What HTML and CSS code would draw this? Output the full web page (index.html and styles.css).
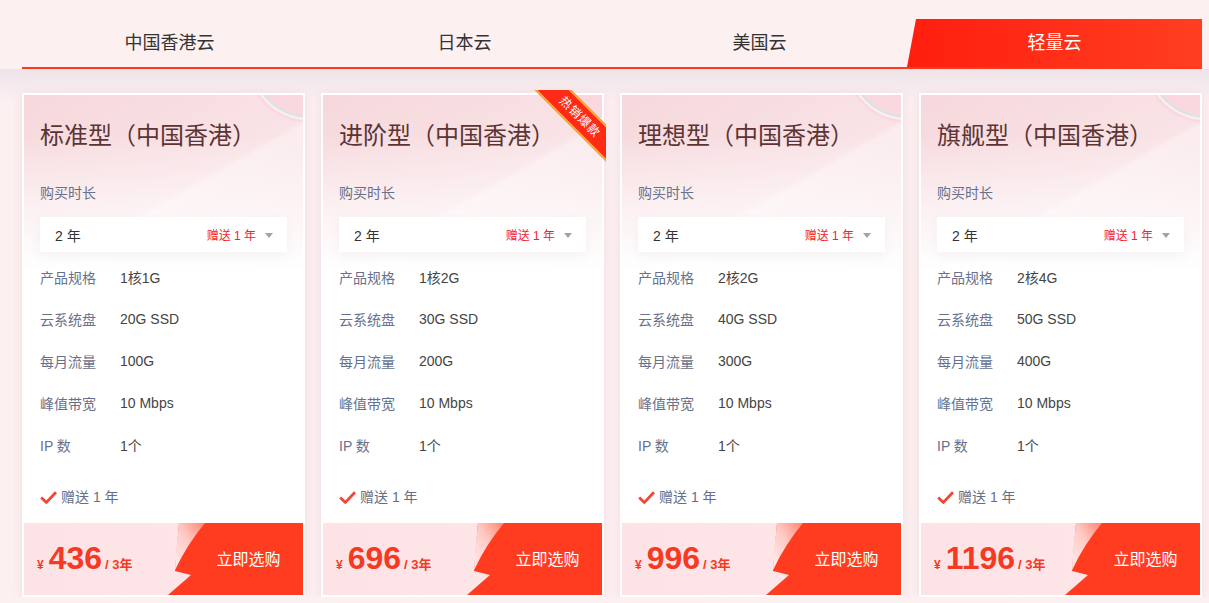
FILE: index.html
```html
<!DOCTYPE html>
<html lang="zh-CN">
<head>
    <meta charset="UTF-8">
    <title>云服务器套餐</title>
    <link rel="stylesheet" href="styles.css">
</head>
<body>
    <svg class="svg-defs" width="0" height="0">
        <defs>
            <linearGradient id="curl" x1="1" y1="0" x2="0" y2="1">
                <stop offset="0" stop-color="#ff846f"/>
                <stop offset="0.45" stop-color="#ffc8c2"/>
                <stop offset="1" stop-color="#ffeeee"/>
            </linearGradient>
        </defs>
    </svg>

    <div class="header">
        <ul class="tabs">
            <li class="tab">中国香港云</li>
            <li class="tab">日本云</li>
            <li class="tab">美国云</li>
            <li class="tab active">轻量云</li>
        </ul>
    </div>

    <div class="main">
        <!-- 标准型 -->
        <div class="card">
            <div class="card-body">
                <h3 class="title">标准型（中国香港）</h3>
                <p class="label">购买时长</p>
                <div class="select">
                    <span class="select-value">2 年</span>
                    <span class="gift">赠送 1 年</span>
                    <i class="arrow"></i>
                </div>
                <ul class="specs">
                    <li><span class="spec-name">产品规格</span><span class="spec-value">1核1G</span></li>
                    <li><span class="spec-name">云系统盘</span><span class="spec-value">20G SSD</span></li>
                    <li><span class="spec-name">每月流量</span><span class="spec-value">100G</span></li>
                    <li><span class="spec-name">峰值带宽</span><span class="spec-value">10 Mbps</span></li>
                    <li><span class="spec-name">IP 数</span><span class="spec-value">1个</span></li>
                </ul>
                <div class="bonus">
                    <svg class="check" width="17" height="13" viewBox="0 0 17 13"><path d="M1.2 6.4 L6.4 11.4 L16 1.2" fill="none" stroke="#f24634" stroke-width="2.8" stroke-linejoin="round"/></svg>
                    赠送 1 年
                </div>
            </div>
            <div class="card-foot">
                <div class="price"><span class="yen">¥</span><span class="num">436</span><span class="unit">/ 3年</span></div>
                <a class="buy" href="#">
                    <svg class="buy-bg" width="137" height="72" viewBox="0 0 137 72">
                        <path d="M13 0 H137 V72 H2 L25 52 L9 48 Q11 24 13 0 Z" fill="#ff3c1f"/>
                        <path d="M13 0 H39 Q22 20 9 47 Q10 24 13 0 Z" fill="url(#curl)"/>
                    </svg>
                    <span>立即选购</span>
                </a>
            </div>
        </div>

        <!-- 进阶型 -->
        <div class="card">
            <div class="hot"><span>热销爆款</span></div>
            <div class="card-body">
                <h3 class="title">进阶型（中国香港）</h3>
                <p class="label">购买时长</p>
                <div class="select">
                    <span class="select-value">2 年</span>
                    <span class="gift">赠送 1 年</span>
                    <i class="arrow"></i>
                </div>
                <ul class="specs">
                    <li><span class="spec-name">产品规格</span><span class="spec-value">1核2G</span></li>
                    <li><span class="spec-name">云系统盘</span><span class="spec-value">30G SSD</span></li>
                    <li><span class="spec-name">每月流量</span><span class="spec-value">200G</span></li>
                    <li><span class="spec-name">峰值带宽</span><span class="spec-value">10 Mbps</span></li>
                    <li><span class="spec-name">IP 数</span><span class="spec-value">1个</span></li>
                </ul>
                <div class="bonus">
                    <svg class="check" width="17" height="13" viewBox="0 0 17 13"><path d="M1.2 6.4 L6.4 11.4 L16 1.2" fill="none" stroke="#f24634" stroke-width="2.8" stroke-linejoin="round"/></svg>
                    赠送 1 年
                </div>
            </div>
            <div class="card-foot">
                <div class="price"><span class="yen">¥</span><span class="num">696</span><span class="unit">/ 3年</span></div>
                <a class="buy" href="#">
                    <svg class="buy-bg" width="137" height="72" viewBox="0 0 137 72">
                        <path d="M13 0 H137 V72 H2 L25 52 L9 48 Q11 24 13 0 Z" fill="#ff3c1f"/>
                        <path d="M13 0 H39 Q22 20 9 47 Q10 24 13 0 Z" fill="url(#curl)"/>
                    </svg>
                    <span>立即选购</span>
                </a>
            </div>
        </div>

        <!-- 理想型 -->
        <div class="card">
            <div class="card-body">
                <h3 class="title">理想型（中国香港）</h3>
                <p class="label">购买时长</p>
                <div class="select">
                    <span class="select-value">2 年</span>
                    <span class="gift">赠送 1 年</span>
                    <i class="arrow"></i>
                </div>
                <ul class="specs">
                    <li><span class="spec-name">产品规格</span><span class="spec-value">2核2G</span></li>
                    <li><span class="spec-name">云系统盘</span><span class="spec-value">40G SSD</span></li>
                    <li><span class="spec-name">每月流量</span><span class="spec-value">300G</span></li>
                    <li><span class="spec-name">峰值带宽</span><span class="spec-value">10 Mbps</span></li>
                    <li><span class="spec-name">IP 数</span><span class="spec-value">1个</span></li>
                </ul>
                <div class="bonus">
                    <svg class="check" width="17" height="13" viewBox="0 0 17 13"><path d="M1.2 6.4 L6.4 11.4 L16 1.2" fill="none" stroke="#f24634" stroke-width="2.8" stroke-linejoin="round"/></svg>
                    赠送 1 年
                </div>
            </div>
            <div class="card-foot">
                <div class="price"><span class="yen">¥</span><span class="num">996</span><span class="unit">/ 3年</span></div>
                <a class="buy" href="#">
                    <svg class="buy-bg" width="137" height="72" viewBox="0 0 137 72">
                        <path d="M13 0 H137 V72 H2 L25 52 L9 48 Q11 24 13 0 Z" fill="#ff3c1f"/>
                        <path d="M13 0 H39 Q22 20 9 47 Q10 24 13 0 Z" fill="url(#curl)"/>
                    </svg>
                    <span>立即选购</span>
                </a>
            </div>
        </div>

        <!-- 旗舰型 -->
        <div class="card">
            <div class="card-body">
                <h3 class="title">旗舰型（中国香港）</h3>
                <p class="label">购买时长</p>
                <div class="select">
                    <span class="select-value">2 年</span>
                    <span class="gift">赠送 1 年</span>
                    <i class="arrow"></i>
                </div>
                <ul class="specs">
                    <li><span class="spec-name">产品规格</span><span class="spec-value">2核4G</span></li>
                    <li><span class="spec-name">云系统盘</span><span class="spec-value">50G SSD</span></li>
                    <li><span class="spec-name">每月流量</span><span class="spec-value">400G</span></li>
                    <li><span class="spec-name">峰值带宽</span><span class="spec-value">10 Mbps</span></li>
                    <li><span class="spec-name">IP 数</span><span class="spec-value">1个</span></li>
                </ul>
                <div class="bonus">
                    <svg class="check" width="17" height="13" viewBox="0 0 17 13"><path d="M1.2 6.4 L6.4 11.4 L16 1.2" fill="none" stroke="#f24634" stroke-width="2.8" stroke-linejoin="round"/></svg>
                    赠送 1 年
                </div>
            </div>
            <div class="card-foot">
                <div class="price"><span class="yen">¥</span><span class="num">1196</span><span class="unit">/ 3年</span></div>
                <a class="buy" href="#">
                    <svg class="buy-bg" width="137" height="72" viewBox="0 0 137 72">
                        <path d="M13 0 H137 V72 H2 L25 52 L9 48 Q11 24 13 0 Z" fill="#ff3c1f"/>
                        <path d="M13 0 H39 Q22 20 9 47 Q10 24 13 0 Z" fill="url(#curl)"/>
                    </svg>
                    <span>立即选购</span>
                </a>
            </div>
        </div>
    </div>
</body>
</html>
```

FILE: styles.css
```css
*{
    box-sizing: border-box;
}
body{
    margin: 0;
    background-color: #fdf0f1;
    font-family: "Liberation Sans", "Noto Sans CJK SC", sans-serif;
    color: #333;
}
ul{
    margin: 0;
    padding: 0;
    list-style: none;
}
p, h3{
    margin: 0;
}
.svg-defs{
    display: block;
    width: 0;
    height: 0;
}

/* tabs */
.header{
    background-color: #fdf0f0;
    padding: 19px 0 0 22px;
}
.tabs{
    display: flex;
    width: 1180px;
    border-bottom: 2px solid #ff3a1f;
}
.tab{
    width: 295px;
    height: 48px;
    line-height: 48px;
    text-align: center;
    font-size: 18px;
    color: #333;
    cursor: pointer;
}
.tab.active{
    color: #fff;
    background: linear-gradient(90deg, #ff1e0e, #ff3e21);
    clip-path: polygon(9px 0, 100% 0, 100% 100%, 0 100%);
}

/* cards */
.main{
    display: grid;
    grid-template-columns: repeat(4, 283px);
    gap: 16px;
    padding: 24px 0 0 22px;
    background: linear-gradient(#eee4e9, #fdf0f1 34px);
}
.card{
    position: relative;
    height: 504px;
    display: flex;
    flex-direction: column;
    border: 2px solid #fff;
    box-shadow: 0 2px 10px rgba(190, 150, 170, 0.22);
    background:
        radial-gradient(circle at 285px -35px, rgba(248, 200, 212, 0.45) 0, rgba(248, 200, 212, 0.35) 55px, rgba(170, 228, 222, 0.45) 57px, rgba(255, 255, 255, 0.6) 59px, rgba(255, 185, 210, 0.3) 61px, transparent 64px),
        linear-gradient(to bottom, rgba(255, 255, 255, 0) 40px, #fff 175px),
        linear-gradient(150deg, #f6d8dc 0%, #f9e3e6 28%, #fbecee 29%, #f8e1e4 55%, #fcf1f2 80%),
        #fff;
}
.card-body{
    padding: 24px 16px 0 16px;
}
.title{
    font-size: 24px;
    line-height: 34px;
    font-weight: normal;
    color: #5c3434;
}
.label{
    margin-top: 30px;
    font-size: 14px;
    line-height: 20px;
    color: #67718c;
}
.select{
    display: flex;
    align-items: center;
    height: 35px;
    margin-top: 14px;
    padding: 0 14px 0 15px;
    background-color: #fff;
    box-shadow: 0 4px 12px rgba(120, 90, 100, 0.06);
}
.select-value{
    flex: 1;
    font-size: 14px;
    color: #333;
}
.gift{
    font-size: 12px;
    color: #f5222d;
}
.arrow{
    width: 0;
    height: 0;
    margin: 2px 0 0 9px;
    border-left: 4px solid transparent;
    border-right: 4px solid transparent;
    border-top: 5px solid #a3a3a3;
}
.specs{
    margin-top: 4px;
}
.specs li{
    display: flex;
    align-items: center;
    height: 42px;
    font-size: 14px;
}
.spec-name{
    width: 80px;
    color: #67718c;
}
.spec-value{
    color: #444;
}
.bonus{
    display: flex;
    align-items: center;
    gap: 4px;
    margin-top: 21px;
    line-height: 20px;
    font-size: 14px;
    color: #666e86;
}

/* footer */
.card-foot{
    display: flex;
    align-items: center;
    height: 72px;
    margin-top: auto;
    background: linear-gradient(90deg, #fde3e6, #fde6e9);
}
.price{
    flex: 1;
    display: flex;
    align-items: baseline;
    padding: 4px 0 0 13px;
    color: #f43a22;
    font-weight: bold;
    line-height: 32px;
}
.yen{
    font-size: 12px;
}
.num{
    margin-left: 5px;
    font-size: 32px;
}
.unit{
    margin-left: 3px;
    font-size: 13px;
}
.buy{
    position: relative;
    display: flex;
    align-items: center;
    justify-content: center;
    width: 137px;
    height: 72px;
    padding-left: 28px;
    color: #fff;
    font-size: 16px;
    text-decoration: none;
}
.buy-bg{
    position: absolute;
    left: 0;
    top: 0;
}
.buy span{
    position: relative;
    margin-top: -3px;
}

/* hot ribbon */
.hot{
    position: absolute;
    top: -5px;
    right: -4px;
    width: 76px;
    height: 76px;
    overflow: hidden;
    z-index: 2;
}
.hot span{
    position: absolute;
    left: -10px;
    top: 14px;
    width: 120px;
    height: 26px;
    border-top: 2px solid #f8b12e;
    border-bottom: 2px solid #f8b12e;
    background-color: #ff2b16;
    color: #fff;
    font-size: 12px;
    line-height: 22px;
    letter-spacing: 1px;
    text-align: center;
    transform: rotate(45deg);
}
```
